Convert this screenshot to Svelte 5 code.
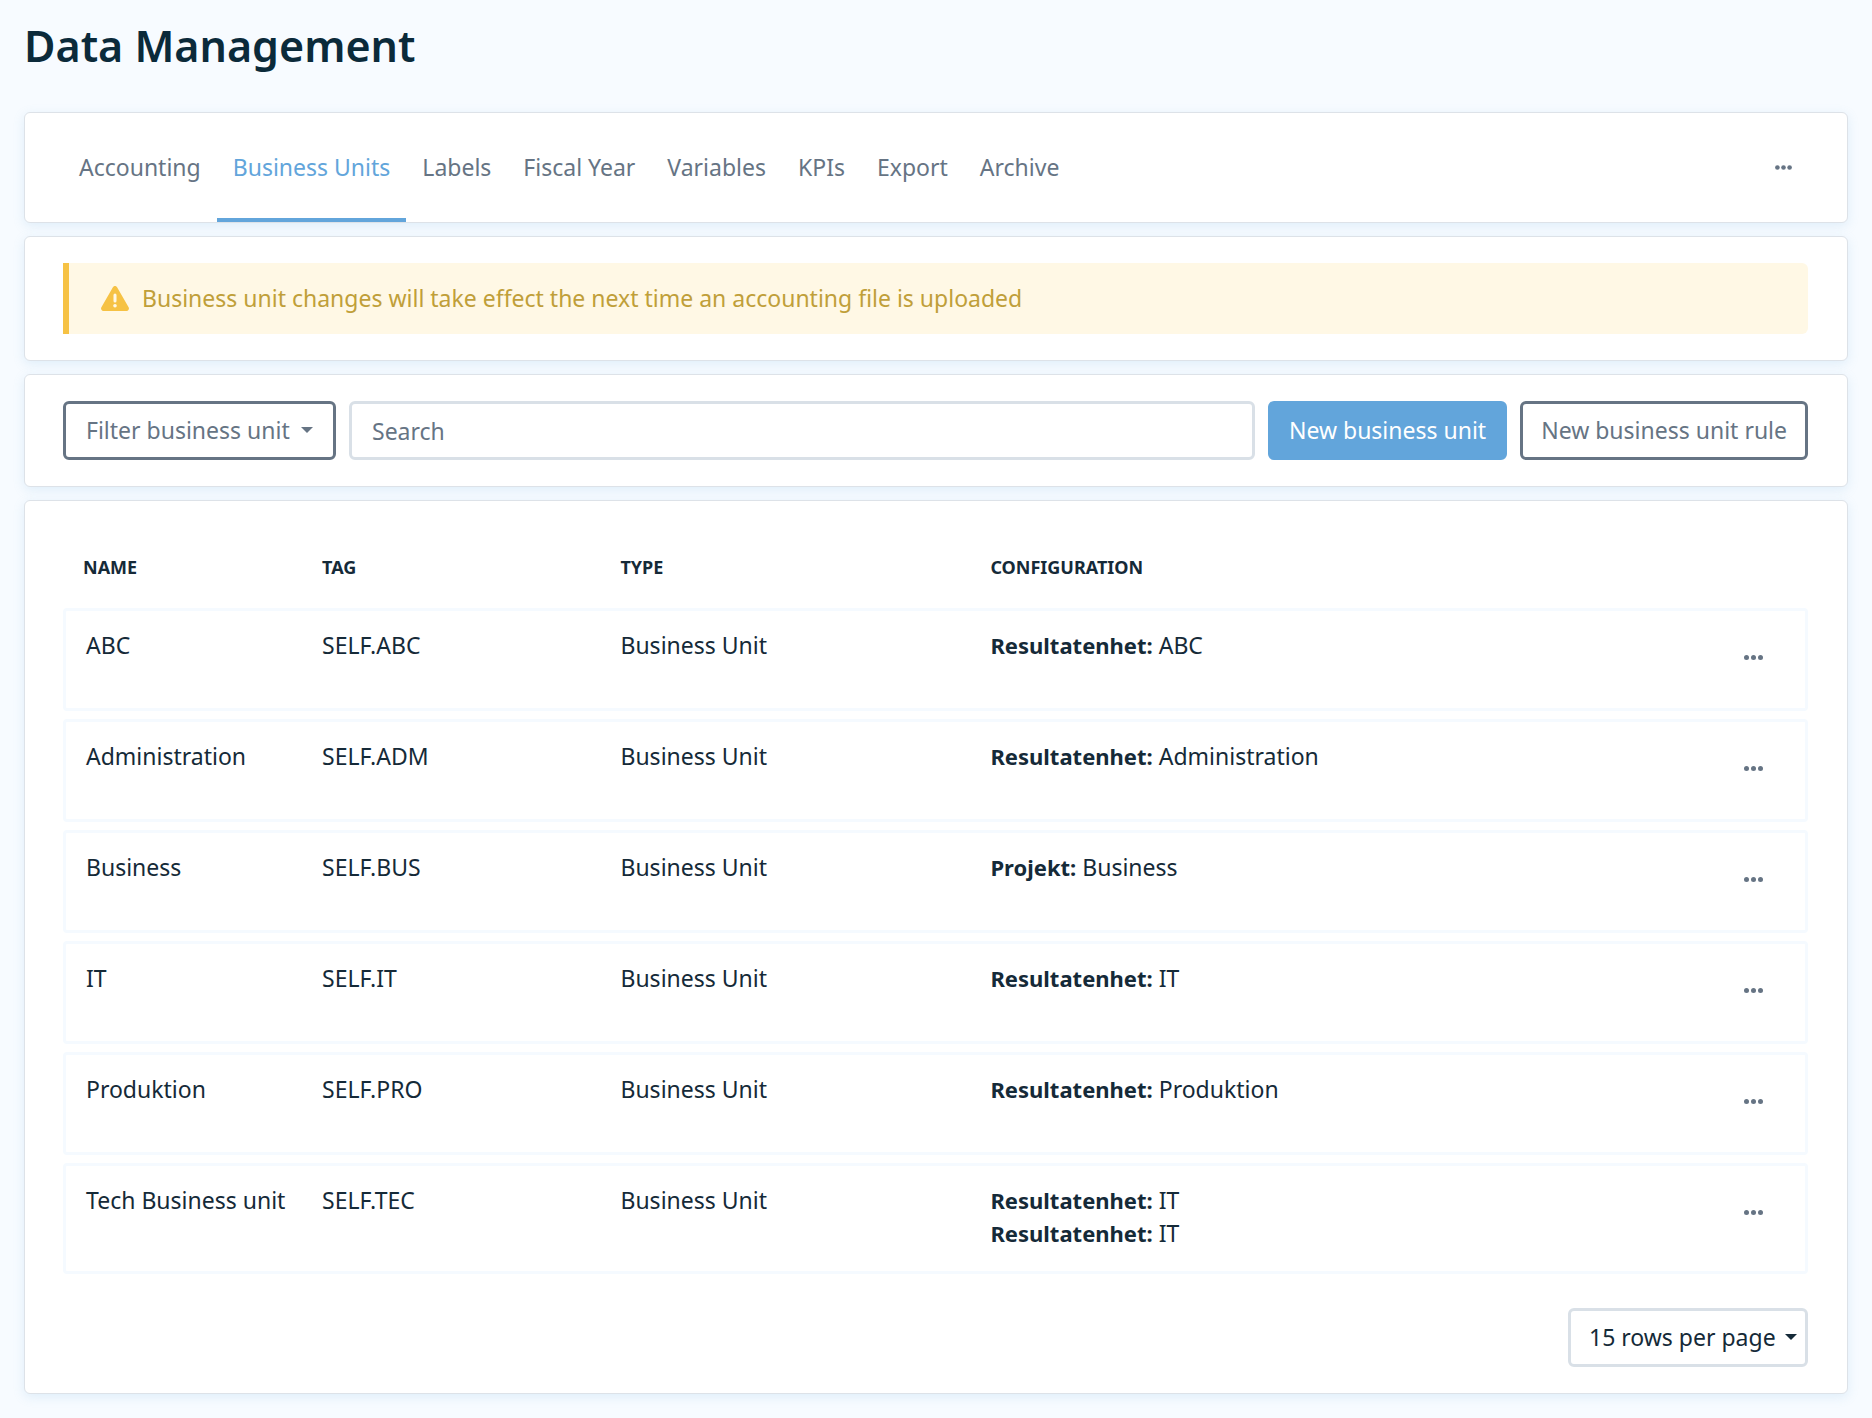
<script lang="ts">
	interface Unit {
		name: string;
		tag: string;
		type: string;
		configuration: { key: string; value: string }[];
	}

	const tabs = [
		'Accounting',
		'Business Units',
		'Labels',
		'Fiscal Year',
		'Variables',
		'KPIs',
		'Export',
		'Archive'
	];
	let activeTab = $state('Business Units');

	const units: Unit[] = [
		{
			name: 'ABC',
			tag: 'SELF.ABC',
			type: 'Business Unit',
			configuration: [{ key: 'Resultatenhet', value: 'ABC' }]
		},
		{
			name: 'Administration',
			tag: 'SELF.ADM',
			type: 'Business Unit',
			configuration: [{ key: 'Resultatenhet', value: 'Administration' }]
		},
		{
			name: 'Business',
			tag: 'SELF.BUS',
			type: 'Business Unit',
			configuration: [{ key: 'Projekt', value: 'Business' }]
		},
		{
			name: 'IT',
			tag: 'SELF.IT',
			type: 'Business Unit',
			configuration: [{ key: 'Resultatenhet', value: 'IT' }]
		},
		{
			name: 'Produktion',
			tag: 'SELF.PRO',
			type: 'Business Unit',
			configuration: [{ key: 'Resultatenhet', value: 'Produktion' }]
		},
		{
			name: 'Tech Business unit',
			tag: 'SELF.TEC',
			type: 'Business Unit',
			configuration: [
				{ key: 'Resultatenhet', value: 'IT' },
				{ key: 'Resultatenhet', value: 'IT' }
			]
		}
	];

	let search = $state('');
	let rowsPerPage = $state(15);

	let visibleUnits = $derived(
		units
			.filter((u) => `${u.name} ${u.tag}`.toLowerCase().includes(search.toLowerCase()))
			.slice(0, rowsPerPage)
	);
</script>

{#snippet caret()}
	<svg class="caret" viewBox="0 0 12 6" width="12" height="6" aria-hidden="true">
		<path d="M0 0h12L6 6z" fill="currentColor" />
	</svg>
{/snippet}

<main>
	<h1>Data Management</h1>

	<div class="card tab-card">
		<nav>
			{#each tabs as tab (tab)}
				<a
					href="#{tab.toLowerCase().replace(' ', '-')}"
					class:active={activeTab === tab}
					onclick={() => (activeTab = tab)}
				>
					{tab}
				</a>
			{/each}
		</nav>
		<button class="more" aria-label="More options">
			<svg viewBox="0 0 17 5" width="17" height="5" fill="currentColor">
				<circle cx="2.4" cy="2.5" r="2.3" />
				<circle cx="8.5" cy="2.5" r="2.3" />
				<circle cx="14.6" cy="2.5" r="2.3" />
			</svg>
		</button>
	</div>

	<div class="card">
		<div class="alert" role="status">
			<svg viewBox="0 0 28 25" width="28" height="25" aria-hidden="true">
				<path
					d="M11.9 1.2a2.4 2.4 0 0 1 4.2 0l11.5 20.1a2.4 2.4 0 0 1-2.1 3.6h-23A2.4 2.4 0 0 1 .4 21.3z"
					fill="#f6c244"
				/>
				<path d="M14 9v6" stroke="#fff8e5" stroke-width="3" stroke-linecap="round" />
				<circle cx="14" cy="19.8" r="1.8" fill="#fff8e5" />
			</svg>
			<span>Business unit changes will take effect the next time an accounting file is uploaded</span>
		</div>
	</div>

	<div class="card toolbar">
		<div class="dropdown filter">
			<select aria-label="Filter business unit">
				<option>Filter business unit</option>
			</select>
			{@render caret()}
		</div>
		<input type="text" placeholder="Search" aria-label="Search" bind:value={search} />
		<button class="btn primary">New business unit</button>
		<button class="btn outline">New business unit rule</button>
	</div>

	<div class="card">
		<table>
			<colgroup>
				<col class="col-name" />
				<col class="col-tag" />
				<col class="col-type" />
				<col />
				<col class="col-actions" />
			</colgroup>
			<thead>
				<tr>
					<th scope="col">Name</th>
					<th scope="col">Tag</th>
					<th scope="col">Type</th>
					<th scope="col">Configuration</th>
					<td></td>
				</tr>
			</thead>
			<tbody>
				{#each visibleUnits as unit (unit.tag)}
					<tr>
						<td>{unit.name}</td>
						<td>{unit.tag}</td>
						<td>{unit.type}</td>
						<td>
							{#each unit.configuration as item}
								<div><strong>{item.key}:</strong> {item.value}</div>
							{/each}
						</td>
						<td class="actions">
							<button class="more" aria-label="Actions for {unit.name}">
								<svg viewBox="0 0 19 5" width="19" height="5" fill="currentColor">
									<circle cx="2.5" cy="2.5" r="2.5" />
									<circle cx="9.5" cy="2.5" r="2.5" />
									<circle cx="16.5" cy="2.5" r="2.5" />
								</svg>
							</button>
						</td>
					</tr>
				{/each}
			</tbody>
		</table>

		<div class="pager">
			<div class="dropdown">
				<select aria-label="Rows per page" bind:value={rowsPerPage}>
					<option value={15}>15 rows per page</option>
					<option value={25}>25 rows per page</option>
					<option value={50}>50 rows per page</option>
				</select>
				{@render caret()}
			</div>
		</div>
	</div>
</main>

<style>
	:global(body) {
		background: #f7fbff;
	}

	main {
		display: flex;
		flex-direction: column;
		gap: 13px;
		padding: 14px 24px 23px;
		font-family: 'Noto Sans', sans-serif;
		font-size: 23px;
		line-height: 33px;
		color: #152a38;
	}

	h1 {
		margin: 0 0 21px;
		font-size: 43px;
		font-weight: 600;
		line-height: 64px;
		color: #0b2a3a;
	}

	.card {
		padding: 26px 39px 26px 38px;
		background: #fff;
		border: 1px solid #dde2e8;
		border-radius: 6px;
		box-shadow: 0 3px 12px rgba(98, 165, 219, 0.16);
	}

	.tab-card {
		display: flex;
		align-items: center;
		justify-content: space-between;
		padding-top: 0;
		padding-bottom: 0;
	}

	nav {
		display: flex;
	}

	nav a {
		padding: 38px 16px 34px;
		border-bottom: 4px solid transparent;
		color: #667484;
		text-decoration: none;
	}

	nav a.active {
		color: #62a5db;
		border-bottom-color: #62a5db;
	}

	.more {
		display: inline-flex;
		align-items: center;
		justify-content: center;
		width: 50px;
		height: 56px;
		padding: 0;
		border: 0;
		background: none;
		color: #667484;
		cursor: pointer;
	}

	.alert {
		display: flex;
		align-items: center;
		gap: 13px;
		min-height: 71px;
		padding: 0 32px;
		box-sizing: border-box;
		border-left: 6px solid #f6c244;
		border-radius: 0 6px 6px 0;
		background: #fff8e5;
		color: #c09f39;
	}

	.toolbar {
		display: flex;
		gap: 13px;
	}

	select,
	input,
	.btn {
		height: 59px;
		padding: 0 20px;
		box-sizing: border-box;
		border: 3px solid #d9e0e7;
		border-radius: 6px;
		background: #fff;
		font: inherit;
		color: inherit;
	}

	input {
		flex: 1;
		min-width: 0;
	}

	input::placeholder {
		color: #667484;
		opacity: 1;
	}

	.btn {
		padding: 0 18px;
		cursor: pointer;
		white-space: nowrap;
	}

	.btn.primary {
		border-color: #62a5db;
		background: #62a5db;
		color: #fff;
	}

	.btn.outline {
		border-color: #667484;
		color: #667484;
	}

	.dropdown {
		position: relative;
	}

	.dropdown select {
		padding: 0 29px 0 18px;
		appearance: none;
		cursor: pointer;
	}

	.dropdown .caret {
		position: absolute;
		top: 26px;
		right: 11px;
		pointer-events: none;
	}

	.filter {
		color: #667484;
	}

	.filter select {
		padding: 0 43px 0 20px;
		border-color: #667484;
	}

	.filter .caret {
		right: 23px;
	}

	table {
		width: 100%;
		table-layout: fixed;
		border-collapse: separate;
		border-spacing: 0 8px;
	}

	.col-name {
		width: 13.7%;
	}

	.col-tag {
		width: 17.1%;
	}

	.col-type {
		width: 21.2%;
	}

	.col-actions {
		width: 107px;
	}

	th {
		padding: 21px 20px;
		font-size: 18px;
		font-weight: 700;
		line-height: 23px;
		text-align: left;
		text-transform: uppercase;
	}

	tbody td {
		padding: 18px 20px 21px;
		border: solid #f5faff;
		border-width: 3px 0;
		vertical-align: top;
	}

	tbody td:first-child {
		border-left-width: 3px;
		border-radius: 4px 0 0 4px;
		white-space: nowrap;
	}

	tbody td:last-child {
		border-right-width: 3px;
		border-radius: 0 4px 4px 0;
	}

	strong {
		font-size: 22px;
		font-weight: 700;
	}

	tbody .actions {
		padding-bottom: 23px;
		line-height: 0;
		text-align: center;
	}

	.pager {
		display: flex;
		justify-content: flex-end;
		margin-top: 26px;
	}
</style>
